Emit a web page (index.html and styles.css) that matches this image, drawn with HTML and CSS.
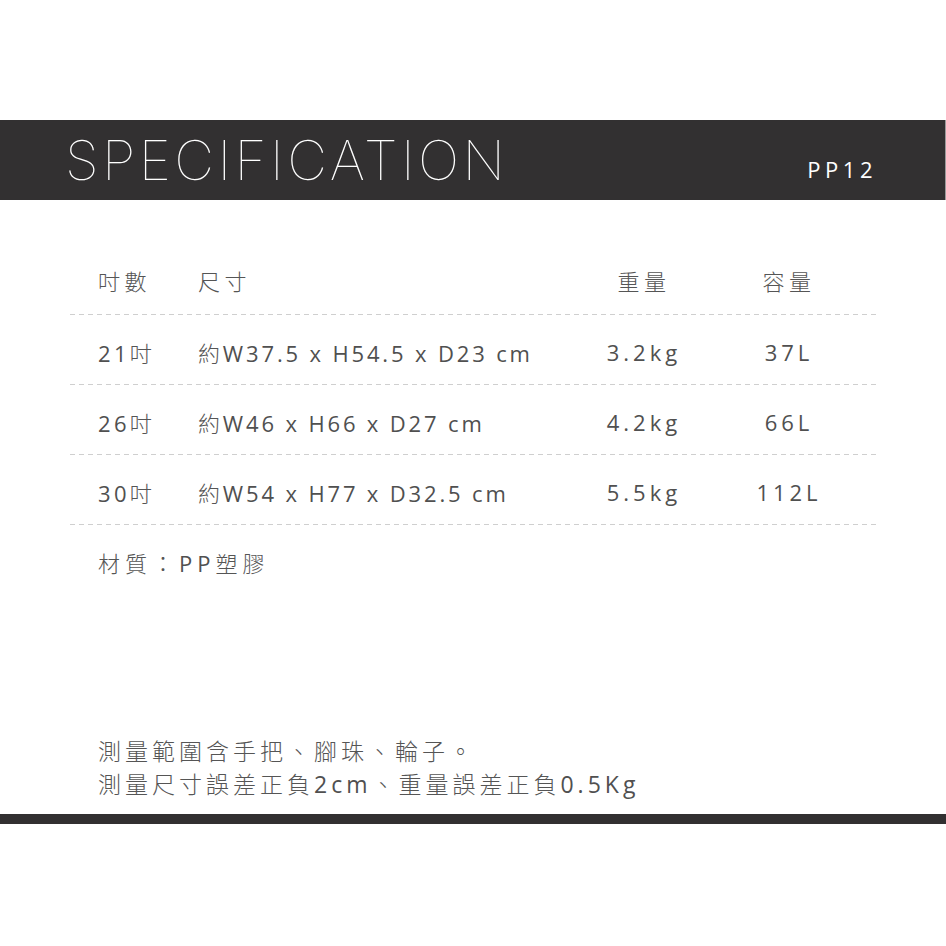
FILE: index.html
```html
<!DOCTYPE html>
<html lang="zh-Hant">
<head>
<meta charset="utf-8">
<title>Specification PP12</title>
<link rel="stylesheet" href="styles.css">
</head>
<body>
<div class="page">
  <header class="banner">
    <h1 class="title">SPECIFICATION</h1>
    <span class="model">PP12</span>
  </header>
  <section class="spec">
    <div class="row head">
      <div class="c1 zh">吋數</div>
      <div class="c2 zh">尺寸</div>
      <div class="c3 zh">重量</div>
      <div class="c4 zh">容量</div>
    </div>
    <div class="row">
      <div class="c1">21<span class="zh">吋</span></div>
      <div class="c2"><span class="zh">約</span>W37.5 x H54.5 x D23 cm</div>
      <div class="c3">3.2kg</div>
      <div class="c4">37L</div>
    </div>
    <div class="row">
      <div class="c1">26<span class="zh">吋</span></div>
      <div class="c2"><span class="zh">約</span>W46 x H66 x D27 cm</div>
      <div class="c3">4.2kg</div>
      <div class="c4">66L</div>
    </div>
    <div class="row">
      <div class="c1">30<span class="zh">吋</span></div>
      <div class="c2"><span class="zh">約</span>W54 x H77 x D32.5 cm</div>
      <div class="c3">5.5kg</div>
      <div class="c4">112L</div>
    </div>
    <p class="material"><span class="zh">材質：</span>PP<span class="zh">塑膠</span></p>
  </section>
  <section class="notes">
    <p><span class="zh">測量範圍含手把、腳珠、輪子。</span></p>
    <p><span class="zh">測量尺寸誤差正負</span>2cm<span class="zh">、重量誤差正負</span>0.5Kg</p>
  </section>
  <div class="footer-bar"></div>
</div>
</body>
</html>
```
FILE: styles.css
```css
html, body {
  margin: 0;
  padding: 0;
  background: #ffffff;
}
body {
  font-family: "Open Sans", "Noto Sans CJK TC", sans-serif;
  color: #505050;
}
.zh {
  font-family: "Noto Sans CJK TC", sans-serif;
  font-weight: 300;
  color: #555555;
}
.page {
  width: 946px;
  padding-top: 120px;
}
.banner {
  height: 80px;
  background: #323031;
  display: flex;
  align-items: center;
  justify-content: space-between;
  padding: 0 68px 0 65px;
  box-sizing: border-box;
  border-right: 1px solid #9a9a9a;
}
.title {
  margin: 0;
  font-family: "Inter", "Roboto", sans-serif;
  font-weight: 100;
  font-size: 55px;
  letter-spacing: 3.4px;
  color: #ffffff;
  line-height: 1;
}
.model {
  font-family: "Open Sans", sans-serif;
  font-size: 22px;
  letter-spacing: 4.5px;
  color: #ffffff;
  padding-top: 18px;
}
.spec {
  margin: 0 70px;
  padding-top: 45px;
}
.row {
  display: grid;
  grid-template-columns: 100px 376px 140px 150px;
  padding: 4px 0 0 28px;
  box-sizing: border-box;
  height: 70px;
  align-items: center;
  font-size: 22px;
  background-image: linear-gradient(to right, #cfcfcf 5px, transparent 5px);
  background-size: 9px 1px;
  background-repeat: repeat-x;
  background-position: left bottom;
}
.row.head {
  padding-top: 0;
}
.c1 {
  letter-spacing: 3.3px;
}
.c2 {
  letter-spacing: 2.85px;
}
.c3, .c4 {
  text-align: center;
  letter-spacing: 4px;
}
.row.head div {
  letter-spacing: 4.5px;
}
.material {
  margin: 21px 0 0 28px;
  font-size: 22px;
  line-height: 32px;
  letter-spacing: 5px;
}
.notes {
  margin: 155px 0 0 98px;
  font-size: 23px;
  letter-spacing: 4px;
  line-height: 32px;
}
.notes p {
  margin: 0;
}
.footer-bar {
  margin-top: 14px;
  height: 10px;
  background: #323031;
}
```
